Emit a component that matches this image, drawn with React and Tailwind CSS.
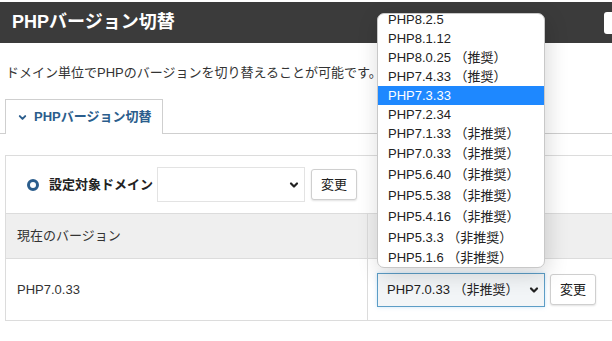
const versions = [
  { label: 'PHP8.2.5', h: 'h-[19px]' },
  { label: 'PHP8.1.12', h: 'h-[19px]' },
  { label: 'PHP8.0.25 （推奨）', h: 'h-[19px]' },
  { label: 'PHP7.4.33 （推奨）', h: 'h-[19px]' },
  { label: 'PHP7.3.33', h: 'h-[19px]', active: true },
  { label: 'PHP7.2.34', h: 'h-[19px]' },
  { label: 'PHP7.1.33 （非推奨）', h: 'h-[19px]' },
  { label: 'PHP7.0.33 （非推奨）', h: 'h-[21px]' },
  { label: 'PHP5.6.40 （非推奨）', h: 'h-[21px]' },
  { label: 'PHP5.5.38 （非推奨）', h: 'h-[21px]' },
  { label: 'PHP5.4.16 （非推奨）', h: 'h-[21px]' },
  { label: 'PHP5.3.3 （非推奨）', h: 'h-[21px]' },
  { label: 'PHP5.1.6 （非推奨）', h: 'h-[20px]' },
];

function Chevron({ className }) {
  return (
    <svg className={className} viewBox="0 0 10 10" fill="none" stroke="currentColor" strokeWidth={2.2}>
      <path strokeLinecap="round" strokeLinejoin="round" d="M2 3.5l3 3 3-3" />
    </svg>
  );
}

function ChangeButton() {
  return (
    <button className="flex h-[31px] w-[46px] shrink-0 items-center justify-center rounded-[3px] border border-[#cfcfcf] bg-white text-[13px] text-[#222] shadow-[0_1px_2px_rgba(0,0,0,0.12)]">
      変更
    </button>
  );
}

export default function App() {
  return (
    <div
      className="relative h-[341px] w-[612px] overflow-hidden bg-white text-[#333]"
      style={{ fontFamily: '"Liberation Sans", "Noto Sans CJK JP", sans-serif' }}
    >
      {/* header */}
      <div className="mt-[2px] flex h-[41px] items-center justify-between bg-[#3b3b3b] pl-[12px]">
        <h1 className="text-[18px] font-bold text-white">PHPバージョン切替</h1>
        <div className="mr-[-20px] h-[22px] w-[28px] rounded-[3px] bg-white" />
      </div>

      <p className="mt-[20px] h-[20px] whitespace-nowrap pl-[6px] text-[13px] leading-[20px]">
        ドメイン単位でPHPのバージョンを切り替えることが可能です。
      </p>

      {/* tabs */}
      <div className="mt-[16px] flex border-b border-[#cfcfcf] pl-[5px]">
        <div className="-mb-px flex h-[35px] w-[158px] items-center gap-[7px] border border-b-0 border-[#cfcfcf] bg-white pl-[12px] text-[13px] font-bold text-[#2b5d8c]">
          <Chevron className="h-[9px] w-[9px]" />
          PHPバージョン切替
        </div>
      </div>

      {/* panel */}
      <div className="ml-[5px] mt-[21px] w-[620px] border border-[#dcdcdc]">
        <div className="flex h-[57px] items-center pl-[21px]">
          <span className="mr-[10px] h-[12px] w-[12px] rounded-full border-[3px] border-[#2b5d8c]" />
          <span className="text-[13px] font-bold text-[#222]">設定対象ドメイン</span>
          <div className="ml-[4px] flex h-[35px] w-[148px] items-center justify-end border border-[#e3e3e3] bg-white pr-[5px] text-[#222]">
            <Chevron className="h-[10px] w-[10px]" />
          </div>
          <div className="ml-[6px]">
            <ChangeButton />
          </div>
        </div>

        <div className="flex h-[45px] border-t border-[#dcdcdc] bg-[#efefef] text-[13px]">
          <div className="flex w-[362px] items-center border-r border-[#dcdcdc] pl-[11px]">現在のバージョン</div>
          <div className="flex-1" />
        </div>

        <div className="flex h-[62px] border-t border-[#dcdcdc] text-[13px]">
          <div className="flex w-[362px] items-center border-r border-[#dcdcdc] pl-[11px]">PHP7.0.33</div>
          <div className="flex flex-1 items-center gap-[5px] pl-[9px]">
            <div className="flex h-[34px] w-[168px] items-center justify-between border border-[#5c9dc6] bg-[#f2f5f7] pl-[9px] pr-[5px] text-[13px] text-[#222] shadow-[0_0_4px_rgba(102,175,233,0.35)]">
              PHP7.0.33 （非推奨）
              <Chevron className="h-[10px] w-[10px]" />
            </div>
            <ChangeButton />
          </div>
        </div>
      </div>

      {/* open select list */}
      <div className="absolute left-[377px] top-[13px] h-[255px] w-[168px] overflow-hidden rounded-[7px] border border-[#c8c8c8] bg-white shadow-[2px_6px_22px_rgba(0,0,0,0.16)]">
        <ul className="-mt-[4px] text-[13px] text-[#222]">
          {versions.map((v) => (
            <li
              key={v.label}
              className={`flex items-center whitespace-nowrap pl-[10px] ${v.h} ${v.active ? 'bg-[#1e88ff] text-white' : ''}`}
            >
              {v.label}
            </li>
          ))}
        </ul>
      </div>
    </div>
  );
}
